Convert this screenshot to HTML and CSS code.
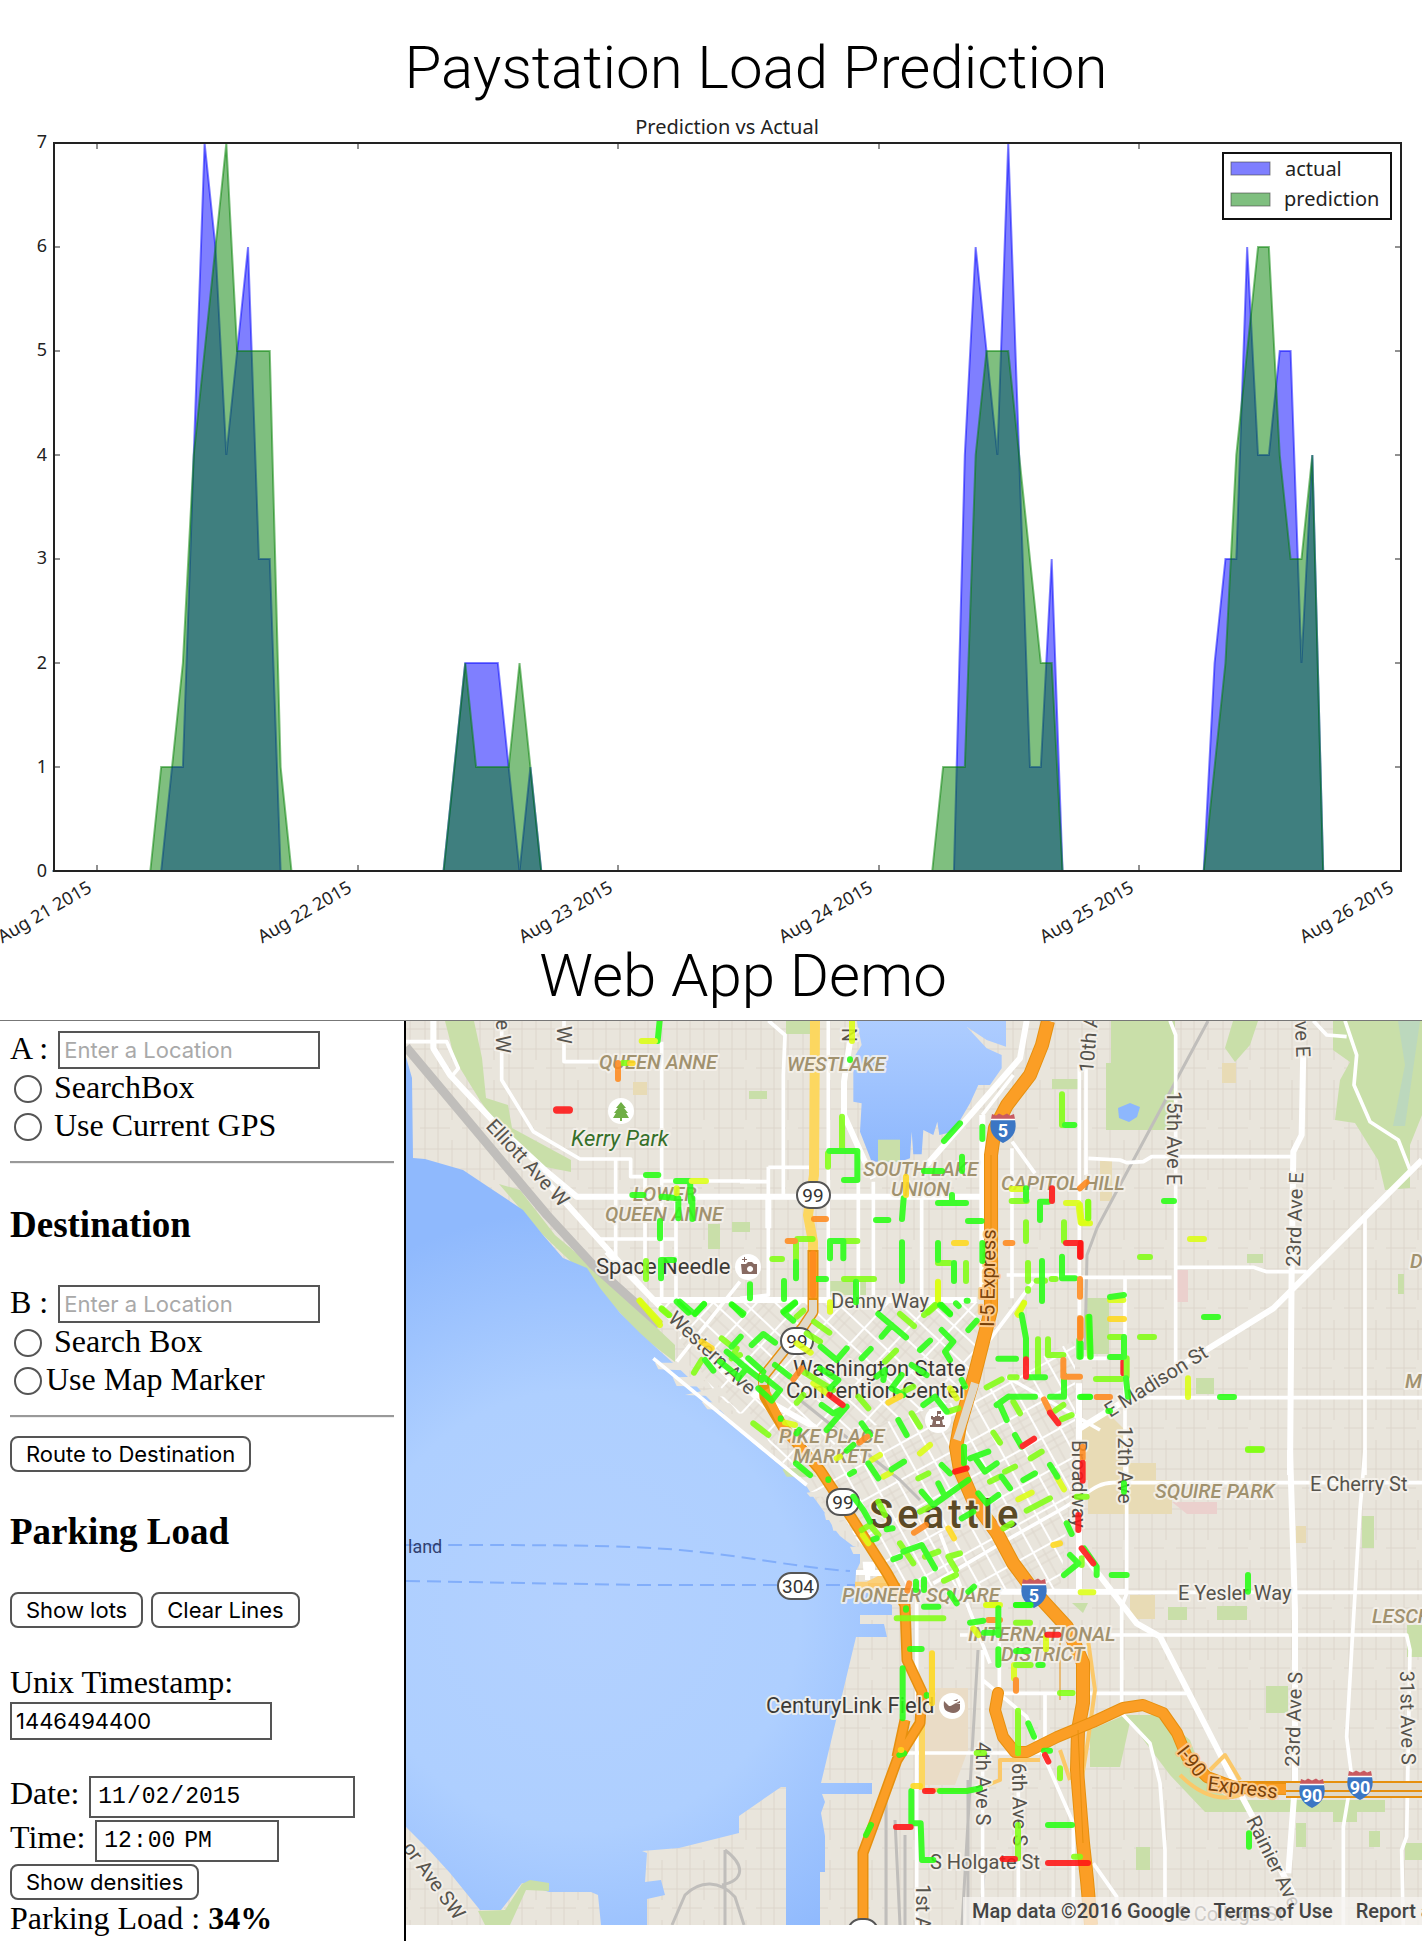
FILE: index.html
```html
<!DOCTYPE html>
<html lang="en">
<head>
<meta charset="utf-8">
<title>Paystation Load Prediction</title>
<link rel="stylesheet" href="styles.css">
</head>
<body>
<section class="prediction">
<h1 class="title">Paystation Load Prediction</h1>
<svg class="chart" viewBox="0 104 1422 836" role="img" aria-label="Prediction vs Actual">
  <text class="chart-title" x="727" y="134">Prediction vs Actual</text>
  <!-- series: one unit of x is an hour, one unit of y a car -->
  <g class="series" transform="translate(96 871) scale(10.86 -104)">
    <path class="actual" d="M-4 0H6L7 1H8L9 4L10 7L11 6L12 4L13 5L14 6L15 3H16L17 0H32L34 2H37L39 0L40 1L41 0H79L80 4L81 6L82 5L83 4L84 7L85 4L86 1H87L88 3L89 0H102L103 2L104 3H105L106 6L107 4H108L109 5H110L111 2L112 4L113 0H120"/>
    <path class="predicted" d="M-4 0H5L6 1H7L8 2L9 4L12 7L13 5H16L17 1L18 0H32L34 2L35 1H38L39 2L41 0H77L78 1H80L81 4L82 5H84L85 4L87 2H88L89 0H102L103 1L104 2L105 4L106 5L107 6H108L109 4L110 3H111L112 4L113 0H120"/>
  </g>
  <rect class="frame" x="54" y="143" width="1347" height="728"/>
  <path class="ticks" d="M97 143v6M358 143v6M618 143v6M879 143v6M1139 143v6M97 871v-6M358 871v-6M618 871v-6M879 871v-6M1139 871v-6M54 767h6M54 663h6M54 559h6M54 455h6M54 351h6M54 247h6M1401 767h-6M1401 663h-6M1401 559h-6M1401 455h-6M1401 351h-6M1401 247h-6"/>
  <g class="tick-label">
    <text x="47" y="148">7</text><text x="47" y="252">6</text><text x="47" y="356">5</text><text x="47" y="461">4</text><text x="47" y="564">3</text><text x="47" y="669">2</text><text x="47" y="773">1</text><text x="47" y="877">0</text>
    <text transform="translate(93 891) rotate(-30)">Aug 21 2015</text>
    <text transform="translate(353 891) rotate(-30)">Aug 22 2015</text>
    <text transform="translate(614 891) rotate(-30)">Aug 23 2015</text>
    <text transform="translate(874 891) rotate(-30)">Aug 24 2015</text>
    <text transform="translate(1135 891) rotate(-30)">Aug 25 2015</text>
    <text transform="translate(1395 891) rotate(-30)">Aug 26 2015</text>
  </g>
  <rect class="legend-box" x="1223" y="153" width="168" height="66"/>
  <rect class="key actual" x="1231" y="162" width="39" height="13"/>
  <rect class="key predicted" x="1231" y="193" width="39" height="13"/>
  <text class="legend-text" x="1285" y="176">actual</text>
  <text class="legend-text" x="1284" y="206">prediction</text>
</svg>
</section>

<h1 class="title title-demo">Web App Demo</h1>
<main class="demo">
<form class="panel">
  <div class="row"><label for="a">A :</label><input class="field" id="a" type="text" placeholder="Enter a Location"></div>
  <div class="choice"><input type="radio" name="from" id="a1"><label for="a1">SearchBox</label></div>
  <div class="choice"><input type="radio" name="from" id="a2"><label for="a2">Use Current GPS</label></div>
  <hr>
  <h3>Destination</h3>
  <div class="row"><label for="b">B :</label><input class="field" id="b" type="text" placeholder="Enter a Location"></div>
  <div class="choice"><input type="radio" name="to" id="b1"><label for="b1">Search Box</label></div>
  <div class="choice tight"><input type="radio" name="to" id="b2"><label for="b2">Use Map Marker</label></div>
  <hr>
  <div class="buttons route"><button type="button">Route to Destination</button></div>
  <h3>Parking Load</h3>
  <div class="buttons"><button type="button">Show lots</button><button type="button">Clear Lines</button></div>
  <div class="stamp"><label for="ts">Unix Timestamp:</label><input class="field" id="ts" type="text" value="1446494400"></div>
  <div class="row when"><label for="date">Date:</label><input class="field mono" id="date" type="date" value="2015-11-02"></div>
  <div class="row when"><label for="time">Time:</label><input class="field mono short" id="time" type="time" value="12:00"></div>
  <div class="buttons"><button type="button">Show densities</button></div>
  <p class="load">Parking Load : <b>34%</b></p>
</form>

<div class="map">
<svg class="canvas" viewBox="406 1021 1016 904" role="img" aria-label="Map of Seattle">
<defs>
  <radialGradient id="bay" gradientUnits="userSpaceOnUse" cx="580" cy="1610" r="400"><stop offset="0" stop-color="#b3d1ff"/><stop offset=".55" stop-color="#aecfff"/><stop offset="1" stop-color="#8fb9fd"/></radialGradient>
  <linearGradient id="lake" x1="0" y1="0" x2="0" y2="1"><stop offset="0" stop-color="#aecdff"/><stop offset="1" stop-color="#8db7fd"/></linearGradient>
  <pattern id="blocks" width="42" height="60" patternUnits="userSpaceOnUse"><path class="lane" d="M5 0V60M18 0V60M32 0V40M0 9H42M0 29H42M0 48H30"/></pattern>
  <pattern id="belltown" width="32" height="21" patternUnits="userSpaceOnUse" patternTransform="rotate(43)"><path class="lane" d="M0 14H32M16 0V21M9 0V21"/><path class="street" d="M0 4H32M2 0V21"/></pattern>
  <pattern id="center" width="21" height="32" patternUnits="userSpaceOnUse" patternTransform="rotate(-29)"><path class="lane" d="M14 0V32M0 17H21M0 10H21"/><path class="street" d="M4 0V32M0 3H21"/></pattern>
  <symbol id="interstate" viewBox="0 0 26 31" overflow="visible"><path fill="#c95a60" d="M2 1l4 1.500 3-2 4 2 4-2 3 2 4-1.500 1 5H1z"/><path fill="#3b76c4" d="M1 7H25C27 16 25 24 13 30 1 24-1 16 1 7z"/><path stroke="#fff" stroke-width="1.500" d="M1 6.500H25"/></symbol>
</defs>
<rect x="406" y="1021" width="1016" height="904" fill="#e9e5dc"/>
<rect x="406" y="1021" width="1016" height="904" fill="url(#blocks)"/>
<!-- parks, campuses and hospitals -->
<g class="park">
  <path d="M445 1021H474L482 1058L486 1098L508 1105L512 1128L571 1160V1172L535 1165L505 1135L481 1102L455 1060Z"/>
  <path d="M499 1184L520 1190L555 1235L587 1262L620 1290L640 1312L675 1345V1362L640 1335L590 1280L543 1235Z"/>
  <path d="M786 1021h24v13h-24zM749 1091h18v8h-18zM878 1139h22v22h-22zM1052 1079h28v10h-28zM1111 1021H1175V1130H1106V1063H1111ZM1233 1021H1258L1250 1045L1235 1062L1225 1048ZM1333 1021H1422V1115L1410 1145V1188L1385 1190L1378 1160L1355 1123L1335 1120L1340 1080L1350 1062L1333 1050ZM830 1281h36v14h-36zM1087 1298h22v56h-22zM1247 1254h16v9h-16zM1398 1274h6v20h-6zM1196 1378h18v16h-18zM708 1224h12v25h-12zM732 1222h18v10h-18z"/>
  <path d="M1090 1730L1125 1715H1160L1190 1740L1205 1780L1230 1800H1385V1812H1205L1170 1775L1130 1722L1120 1767H1090ZM1266 1686h22v27h-22zM1362 1516h12v32h-12zM1168 1607h19v13h-19zM1217 1606h30v14h-30zM1407 1625h15v32h-15zM1136 1847h14v23h-14zM1296 1823h10v24h-10zM1333 1812h24v10h-24zM1369 1831h11v16h-11zM1405 1843h17v17h-17zM1072 1603h16l-5 10z"/>
</g>
<path fill="#bcd8bd" d="M1398 1021H1420L1405 1126H1393L1405 1065Z"/>
<path fill="#e8dbb5" d="M633 1082h14v13h-14zM1222 1063h14v20h-14zM1100 1161h12v40h-12zM1080 1430L1105 1410L1125 1430V1463H1156V1480H1172V1514H1088V1480H1080ZM1130 1595h25v24h-25zM1296 1526h10v17h-10z"/>
<path fill="#ebd0cd" d="M990 1437L1018 1430L1028 1447L985 1475ZM1040 1460L1080 1440V1490L1055 1500L1035 1475ZM1020 1550L1045 1535L1064 1555L1060 1565L1030 1570ZM1175 1270h13v32h-13zM1172 1502h45v12h-30z"/>
<path fill="#eadcc6" d="M937 1688H968V1750L955 1785H925V1720Z"/>
<path fill="#8db7fd" d="M1118 1108l12-5 10 4-3 10-8 5-10-4z"/>
<!-- downtown grids -->
<path fill="#e9e5dc" d="M655 1302H985L960 1425L880 1440L760 1440Z"/><path fill="url(#belltown)" d="M655 1302H985L960 1420L860 1430L790 1470L720 1400Z"/>
<path fill="#e9e5dc" d="M790 1470L860 1430L960 1400L1075 1340V1440L1060 1590H905Z"/><path fill="url(#center)" d="M790 1470L860 1430L960 1400L1075 1340V1440L1060 1590H905Z"/>
<!-- water -->
<path fill="#e9e5dc" d="M655 1361L677 1362L700 1393L860 1590L845 1560H850L833 1535V1520L823 1510L807 1490L780 1460L700 1410Z"/>
<path fill="url(#bay)" d="M406 1057L412 1078L413 1158L425 1159L463 1170L490 1188L523 1210L543 1235L563 1258L587 1268L600 1288L620 1313L640 1333L672 1362L688 1377L700 1390L712 1402L730 1420L776 1462L787 1470L807 1487L812 1495L825 1513L833 1527L840 1536L853 1546L860 1548V1563L856 1571L855 1587L892 1605V1615H860V1624H884L887 1637H856L821 1783H872V1794H822L825 1802L821 1813L825 1836V1872H820V1925H786V1787H781L739 1816V1833L679 1848L642 1851L647 1853L645 1882L661 1880L665 1895L647 1899V1925H601L598 1895L591 1892H549L522 1883L501 1910H480L450 1873L429 1850L406 1827Z"/>
<g transform="translate(620 1280) scale(.33333)">
  <path fill="#e9e5dc" d="M105 248H200L225 272L115 268ZM158 292L240 290L270 320L170 318ZM195 345L300 320L330 350ZM245 365L330 370L350 392L262 388ZM300 403L390 400L440 470L468 545L400 490L330 425ZM560 638L650 625V650H570ZM613 700H700L710 720H618ZM636 735H720L725 752H640ZM690 800H750L755 822H700ZM683 765H740V778Z"/>
  <path fill="#c9dfa9" d="M487 568L550 562L590 590H500Z"/>
  <path fill="#fbd07a" d="M705 905H740L780 885L830 905L850 950L790 925H705Z"/><path fill="#fff" d="M708 870H730L728 845H765V870H785V888H750V900H735V885H708Z"/>
</g>
<g transform="translate(740 1015) scale(.33333)"><path fill="url(#lake)" d="M350 17H798V95L740 75L680 35L740 100L785 120V160L750 210H715L690 265L640 350L598 360L592 320L580 360L550 345L545 418H520L515 350L510 430L480 440H395L360 350L365 265L340 260V130L365 90Z"/><path fill="#c9dfa9" d="M414 374H480V440H414Z"/></g>
<path fill="#c9dfa9" d="M478 1911L505 1910L522 1884L530 1880L549 1883V1891L526 1890L510 1925H485Z"/>
<path class="ferry" d="M406 1545C560 1545 620 1545 680 1550S800 1568 850 1571M406 1581L640 1585H855"/>
<path class="rail" d="M722 1885C745 1880 745 1865 725 1850M725 1850V1925M672 1925L685 1895C700 1880 720 1880 735 1897L744 1925M886 1800V1925M895 1820L900 1925M905 1835V1925M968 1780V1925M978 1650L962 1925M985 1860L980 1925"/>
<path class="rail wide" d="M406 1047L547 1215L593 1265L660 1325"/>
<path class="rail" d="M1208 1021L1097 1228L1087 1255L1085 1350M800 1400L900 1480L920 1500"/>
<!-- white streets -->
<g transform="translate(400 1015) scale(.33333)"><path class="road big" d="M100 17V100L150 180L300 340L440 470L530 545H1740M440 500L760 855H1730M620 710L1000 1100L1250 1240"/><path class="road" d="M18 80H140L175 160L150 190M305 17V195L400 350L540 432H692V485H735M492 17V140H600M785 80V855M647 435V725M735 490V800M828 560V850M590 672H830M785 498H1050M1020 800L830 1040M760 1030L1220 1410"/></g>
<g transform="translate(740 1015) scale(.33333)"><path class="road big" d="M85 540V640M330 80L312 200V300L370 430L400 490M560 450L840 130L860 17M727 300V850"/><path class="road" d="M85 455V840L0 850M85 457H210M0 500H80M265 17V870M355 500V850M545 545V850M727 300L820 180M130 180V540M85 17L135 60L130 180M816 400V850M816 380L885 475M400 500V860M1018 150V900M800 780H1020M880 800L700 1040"/></g>
<g transform="translate(1080 1015) scale(.33333)"><path class="road big" d="M670 100L665 360L640 410L635 760L630 1380M1026 435L580 880L0 1240"/><path class="road" d="M18 150V480M270 17L287 60V1060M25 430L120 435L140 443L190 440L215 425H640M700 17L740 60L800 65M795 17L830 120L822 210L870 320L955 375L990 465M0 787H275M287 757H520L560 770H680M855 610V1380M145 1148H1026M135 790V1380M0 1030H80"/></g>
<g transform="translate(960 1450) scale(.33333)"><path class="road big" d="M990 0L1005 480V1000L985 1270M0 425H500M357 -200V420M360 300L530 520L600 560L830 1010L1000 1330"/><path class="road" d="M500 427H1386M0 555H1340L1350 600L1340 1160L1325 1200L1330 1425M1215 0L1200 180L1175 600L1160 860L1175 980L1150 1130V1425M1386 98H460C400 100 390 130 300 180L140 270L-80 400M500 0V430L485 470V790L570 880L600 1000L615 1200V1425M130 730H680M68 600V1425M-170 909H240M175 900V1425M118 480V730M68 690L200 800L340 1120V1425M400 1240L470 1340V1425M255 730V900M-130 420V1425M-60 250L90 640M420 -60L140 -220"/></g>
<!-- highways -->
<path class="ramp" d="M1088 1640L1095 1690L1088 1740L1080 1790M1070 1780L1060 1750M1210 1770L1225 1755L1240 1780M1180 1775Q1210 1805 1240 1795M925 1790H975L1000 1780V1760H1040M868 1585H900"/>
<path class="sr" d="M815 1021L814 1175L808 1215L813 1242V1280"/><path class="sr thin" d="M922 1700V1790"/>
<path class="casing" d="M813 1250V1312L803 1327L763 1377L765 1397L783 1427L820 1470L853 1520L887 1573L905 1605L907 1660L922 1692L920 1723L897 1760L880 1807L863 1853V1925M905 1720L897 1757"/>
<path class="freeway" d="M765 1390L783 1427L820 1470L853 1520L887 1573L905 1605L907 1660L922 1692L920 1723L897 1760L880 1807L863 1853V1925M905 1720L897 1757M813 1252V1298"/>
<path class="tunnel" d="M813 1300V1312L803 1327L763 1377V1385"/>
<path class="casing i" d="M1048 1021L1042 1045L1030 1075L1007 1105L995 1128L991 1155V1310L974 1377L960 1425L956 1447L960 1470L973 1500L997 1533L1013 1563L1033 1590L1067 1627L1083 1663V1703L1078 1730L1077 1770L1083 1843L1087 1880L1091 1925"/>
<path class="freeway i" d="M1048 1021L1042 1045L1030 1075L1007 1105L995 1128L991 1155V1310L974 1377L960 1425L956 1447L960 1470L973 1500L997 1533L1013 1563L1033 1590L1067 1627L1083 1663V1703L1078 1730L1077 1770L1083 1843L1087 1880L1091 1925"/>
<path class="tunnel" d="M975 1383L961 1428L957 1440"/>
<path class="casing i90" d="M998 1693L995 1710L1003 1737L1015 1752H1027L1057 1737L1093 1722L1123 1708L1143 1705L1163 1713L1177 1733L1187 1757L1207 1777L1237 1788L1288 1789"/><path class="freeway i90" d="M998 1693L995 1710L1003 1737L1015 1752H1027L1057 1737L1093 1722L1123 1708L1143 1705L1163 1713L1177 1733L1187 1757L1207 1777L1237 1788L1288 1789"/>
<path fill="#e0d8c8" d="M1286 1782H1422V1798H1286z"/><path class="deck" d="M1225 1782H1422M1286 1791H1422M1286 1797H1422"/>
<path class="seam" d="M991 1155V1310M1060 1640V1700M1078 1730L1083 1843"/>
<!-- labels -->
<g class="hood">
  <text x="599" y="1069">QUEEN ANNE</text><text x="787" y="1071">WESTLAKE</text><text x="633" y="1201">LOWER</text><text x="605" y="1221">QUEEN ANNE</text><text x="863" y="1176">SOUTH LAKE</text><text x="891" y="1196">UNION</text><text x="1001" y="1190">CAPITOL HILL</text><text x="779" y="1443">PIKE PLACE</text><text x="793" y="1463">MARKET</text><text x="842" y="1602">PIONEER SQUARE</text><text x="968" y="1641">INTERNATIONAL</text><text x="1001" y="1661">DISTRICT</text><text x="1155" y="1498">SQUIRE PARK</text><text x="1372" y="1623">LESCHI</text><text x="1410" y="1268">D</text><text x="1405" y="1388">M</text>
</g>
<text class="kerry" x="571" y="1146">Kerry Park</text>
<g class="poi"><text x="596" y="1274">Space Needle</text><text x="793" y="1376">Washington State</text><text x="786" y="1398">Convention Center</text><text x="766" y="1713">CenturyLink Field</text></g>
<text class="city" x="869" y="1528">Seattle</text>
<g class="way">
  <text x="831" y="1308">Denny Way</text><text x="1310" y="1491">E Cherry St</text><text x="1178" y="1600">E Yesler Way</text><text x="930" y="1869">S Holgate St</text><text x="1177" y="1921">S College St</text>
  <text transform="translate(485 1127) rotate(47)">Elliott Ave W</text><text transform="translate(667 1320) rotate(43)">Western Ave</text>
  <text transform="translate(496 1010) rotate(90)">ve W</text><text transform="translate(557 1026) rotate(90)">W</text><text transform="translate(857 1042) rotate(-90)">N</text>
  <text transform="translate(1093 1073) rotate(-85)">10th A</text><text transform="translate(1167 1091) rotate(90)">15th Ave E</text><text transform="translate(1300 1267) rotate(-88)">23rd Ave E</text><text transform="translate(1295 1021) rotate(88)">ve E</text>
  <text transform="translate(1110 1418) rotate(-32)">E Madison St</text><text transform="translate(1118 1426) rotate(90)">12th Ave</text><text transform="translate(1072 1440) rotate(90)">Broadway</text><text transform="translate(976 1742) rotate(90)">4th Ave S</text><text transform="translate(1012 1763) rotate(89)">6th Ave S</text><text transform="translate(916 1884) rotate(90)">1st A</text>
  <text transform="translate(1299 1767) rotate(-88)">23rd Ave S</text><text transform="translate(1400 1671) rotate(89)">31st Ave S</text><text transform="translate(1246 1820) rotate(64)">Rainier Ave</text><text transform="translate(402 1848) rotate(54)">or Ave SW</text>
</g>
<g class="express"><text transform="translate(994 1327) rotate(-89)">I-5 Express</text><text transform="translate(1176 1752) rotate(52)">I-90</text><text transform="translate(1207 1790) rotate(7)">Express</text></g>
<text class="sea" x="408" y="1553">land</text>
<!-- route shields -->
<g class="oval">
  <rect x="797" y="1182" width="33" height="26" rx="13"/><rect x="781" y="1328" width="32" height="26" rx="13"/><rect x="827" y="1489" width="32" height="26" rx="13"/><rect x="778" y="1573" width="40" height="26" rx="13"/><rect x="848" y="1919" width="30" height="26" rx="13"/>
  <text x="813" y="1202">99</text><text x="797" y="1348">99</text><text x="843" y="1509">99</text><text x="798" y="1593">304</text><text x="863" y="1938">99</text>
</g>
<use href="#interstate" x="990" y="1113" width="26" height="31"/><use href="#interstate" x="1021" y="1578" width="26" height="31"/><use href="#interstate" x="1296" y="1778" width="32" height="31"/><use href="#interstate" x="1344" y="1770" width="32" height="31"/>
<g class="number"><text x="1003" y="1137">5</text><text x="1034" y="1602">5</text><text x="1312" y="1802">90</text><text x="1360" y="1794">90</text></g>
<!-- places -->
<g fill="#fff"><circle cx="621" cy="1111" r="13"/><circle cx="748" cy="1267" r="13"/><circle cx="938" cy="1420" r="13"/><circle cx="952" cy="1706" r="13"/></g>
<path fill="#6fae45" d="M621 1102l5 6h-2l4 5h-2l3 5h-7v3h-2v-3h-7l3-5h-2l4-5h-2z"/>
<path fill="#876a62" fill-rule="evenodd" d="M741 1264h5l2-2h4l2 2h3v10h-15zM750 1266a3 3 0 1 0 .1 0zM742 1259h2v-2h1v2h2v1h-2v2h-1v-2h-2z"/>
<path fill="#876a62" fill-rule="evenodd" d="M930 1427v-2h2l1-5-2-1v-3h2v1h2v-1h2v-5h4v3h-3v2h2v1h2v-1h2v3l-2 1 1 5h2v2zM936 1424h4v-3h-4z"/>
<path fill="#876a62" d="M944 1701l5 5c4 0 5-4 11-2v5c-2 4-7 5-11 3-4-1-6-4-5-11zM953 1701l5-2-1 2zM954 1704l6-3v2z"/>
<!-- parking density lines -->
<g class="density" transform="translate(400 1015) scale(.33333)">
  <path class="d0" d="M779 17L773 78M697 540H730M738 480H775M828 498H870L873 560M785 545L835 550V610M877 550V612M780 618V670M783 790V735H822M840 860L875 890M885 895L912 868M995 868L1030 895"/>
  <path class="d1" d="M738 738V792M785 880L808 900M668 144H685"/><path class="d2" d="M725 78H765M875 498H918M830 520V535M718 857L780 930"/><path class="d3" d="M690 145h8"/><path class="d4" d="M654 144V192"/><path class="d5 fat" d="M470 285H508"/>
</g>
<g class="density" transform="translate(740 1015) scale(.33333)">
  <path class="d2" d="M336 20V78M815 522H850M978 564H1015L1022 622H1040M852 865L832 895M594 803V855M270 862V890"/>
  <path class="d1" d="M306 305V405M264 415V455M815 558H860M1045 560V610M858 622V678M972 622V678M172 672H218M168 685V735M315 678H352M594 744H630M678 744V798M97 732H126M864 744V798M890 797H915M935 792h12M864 822v5M966 238V330M590 870L565 892M312 792H402"/>
  <path class="d0" d="M330 133v2M268 408H352V495H312M612 378L660 325M727 335V372M666 425V468M552 468H606M491 550L486 612M594 564H678M636 540V560M408 615H445M684 618H725M858 520V555M900 615V560H925M168 740V790M270 730V678H310V730M486 682V798M594 684V735M642 744V798M727 684V738M906 738V858M966 725V790H1005M228 792H258M348 800V862M30 808V850M132 798V852M165 862L130 890M605 870L630 895M648 865l8 8M680 857h3M975 330H1003"/>
  <path class="d3" d="M498 485V540M642 684H678"/><path class="d4" d="M1020 520L1040 502M797 684H817M222 612H258M143 678H165M1020 792V845M219 715V840"/><path class="d5" d="M936 520V558M978 684H1020V725"/>
</g>
<g class="density" transform="translate(1080 1015) scale(.33333)">
  <path class="d2" d="M330 672H372M0 570L5 625H30M90 855H130M324 1090V1146"/><path class="d3" d="M90 912H132"/><path class="d4" d="M2 912V965M50 1146H90"/><path class="d5" d="M130 1040V1075M2 684V725"/>
  <path class="d1" d="M180 726H210M24 562V610M90 966H130M180 966H222M140 1030V1085M24 906L30 1025M48 1092H125M504 1302H546"/>
  <path class="d0" d="M252 558H282M90 846L132 840M372 906H414M132 966V1025M90 1026H130M138 1090L144 1145M0 1146H30M420 1146H462M85 1188h5M2 985V1025"/>
</g>
<g class="density" transform="translate(620 1280) scale(.33333)">
  <path class="d2" d="M60 62L118 125M954 5V60M530 190L572 218M580 310L620 340M990 325L1010 355M900 520L930 495M755 540L780 525M790 590L812 578M495 428L525 435M650 535l10-5M728 765L745 790M1195 658L1235 638M1310 590L1332 628M1100 975H1140M1212 68L1195 105M1382 937H1420"/>
  <path class="d1" d="M125 88L145 105M530 110L550 92M582 125L628 158M912 105L945 75M840 102L882 138M795 245L828 212M560 160L600 185M305 175L330 195M360 225L335 235L350 205M222 278L245 240M550 275L590 300L640 330M840 340L880 320M715 350L745 385M530 368L550 345M985 395L1015 385M875 400L900 440M895 595L925 580M400 430L445 465M775 665L795 705M725 750L750 735L775 765M900 695L930 680M1110 605L1140 590M1155 575L1185 560M1220 692L1290 655M1150 745L1175 730M1232 535L1265 515M1120 458L1140 488M840 790L880 850M915 830L955 815M985 830L1020 820M990 840L1008 870M972 902L1008 885M830 1015H970M1284 178V225H1330M1170 292H1190M1180 365L1200 400M1305 392L1330 375M1325 418L1355 405M1370 650H1400M1385 835V855M1254 178V288M1100 322L1145 298"/>
  <path class="d0" d="M170 65L205 98M225 102L252 72M337 75L367 105M525 70L492 98L520 122M960 75L990 103M775 102L858 172M785 170L815 135M965 150L1000 185L975 215L990 240M1045 150L1070 122M900 210L930 182M725 235L752 207M602 200L650 240L680 205M395 195L430 162L465 188M335 200L362 170M255 240L280 272M320 215L380 265L355 295M300 245L350 285M385 235L430 275M360 250L425 300M430 290L480 330L455 362L415 325M465 255L510 290M600 265L655 300L630 325M875 255L920 285M770 290L795 270L790 300M845 285L815 325L850 345M605 375L640 400L680 380L620 450M910 375L945 350L980 395M1025 300L1035 320M835 420L860 465M725 430L750 465M680 512L700 495M745 550L775 595M815 568L852 545M690 582L702 575M482 415v2M528 550L570 585M530 460l8-10M625 598v2M700 650L730 690L750 725M800 748L818 745M760 778L770 775M905 635L940 675L1045 600M955 610L975 650M965 555L990 580M1032 500V550M1050 535L1105 515M1070 540L1095 575L1130 550M1075 640L1100 670L1135 645M1025 715L1060 695M1145 590L1170 625M1210 600L1245 580M1290 555L1312 590M1185 465L1205 500M820 838L840 830M850 815L905 795L945 865M1045 935L1062 920M990 940L1010 970M888 905V930M912 898V930M858 985v4M912 980H955M1188 975H1230M1205 105L1218 175V230M1332 285V350H1290M1135 236H1188M1170 350H1245M1225 292H1275M1130 375L1165 350M1140 375L1160 420M1408 110L1412 230M1378 180V230M1385 350H1410M1340 730L1355 762M1350 825L1375 850L1332 885M1392 805L1430 860V885"/>
  <path class="d3" d="M245 185L275 205M805 368L842 348M985 745L1002 775M1300 795L1320 790"/><path class="d4" d="M520 298L545 265M718 488L742 470M882 758L918 735M868 910L862 932M1330 240V290H1380M1272 358L1290 395M1380 115V175M1388 500V535"/><path class="d5" d="M628 345L668 375M1005 575L1040 565M1208 498L1242 476M1218 238V290M1290 398L1315 430M1388 548V602M1375 705V750M1385 805L1420 850"/>
</g>
<g class="density" transform="translate(960 1450) scale(.33333)">
  <path class="d2" d="M78 465H115M258 560V598M162 645V685M40 535l15 20"/><path class="d4" d="M85 510H120M168 690V722"/>
  <path class="d1" d="M864 0H905M168 518H210M168 645H212M300 729H338M174 782V910M300 955V985M50 909H72M174 1125V1225M342 1220H360"/>
  <path class="d0" d="M492 100V125M455 375H500M864 375V425M168 465H212M115 475V555M72 548H100M30 518L70 512M168 603H205M115 598V645M235 645H248M205 820L222 860M252 902H270M-60 1023H20L60 1015M264 1125H336M867 1150V1190M-146 1023V1120H-118L-114 1230H-80M-172 655V805M-150 597H-115M-100 735v2M-182 915l15-5M-282 1155l15-30"/>
  <path class="d3" d="M-84 610V760M-140 1008H-120M-178 900h2"/><path class="d5" d="M262 554H295M255 915L265 935M-105 1023H-82M-192 1131H-148M128 1227H165M264 1239H384"/>
</g>
</svg>
<div class="credit"><span>Map data ©2016 Google</span><a href="#terms">Terms of Use</a><a href="#report">Report a map error</a></div>
</div>
</main>
</body>
</html>
```
FILE: styles.css
```css
* { box-sizing: border-box; }
body { margin: 0; background: #fff; color: #000; font-family: "Liberation Serif", serif; overflow-x: hidden; }

.title { margin: 0; padding: 32px 0 0 90px; text-align: center; font: 300 60px/72px Roboto, sans-serif; }
.title-demo { padding: 0 0 0 64px; }

/* chart */
.chart { display: block; width: 100%; height: auto; overflow: visible; font-family: "Noto Sans", sans-serif; fill: #222; }
.chart-title { font-size: 20px; text-anchor: middle; }
.tick-label { font-size: 18px; text-anchor: end; }
.legend-text { font-size: 20px; }
.series path { stroke-width: 2; vector-effect: non-scaling-stroke; }
.actual { fill: rgba(0, 0, 255, .5); stroke: rgba(0, 0, 255, .5); }
.predicted { fill: rgba(0, 128, 0, .5); stroke: rgba(0, 128, 0, .5); }
.key { stroke: #444; stroke-opacity: .6; }
.frame, .ticks { fill: none; stroke: #222; stroke-width: 2; }
.ticks { stroke-width: 1; }
.legend-box { fill: #fff; stroke: #111; stroke-width: 2; }

/* demo */
.demo { display: flex; align-items: stretch; margin-top: 8px; border-top: 1px solid #777; }
.panel { flex: none; width: 406px; padding: 10px 10px 5px; border-right: 2px solid #000; font-size: 32px; line-height: 34px; }
.row { display: flex; align-items: flex-start; gap: 10px; height: 39px; }
.field { width: 262px; height: 38px; padding: 0 4px; border: 2px solid #555; border-radius: 0; background: #fff; color: #000; font: 22px Inter, sans-serif; }
.field::placeholder { color: #a9a9a9; opacity: 1; }
.choice { display: flex; align-items: flex-start; gap: 12px; height: 38px; padding-left: 4px; }
.choice.tight { gap: 4px; }
.choice input { appearance: none; flex: none; width: 28px; height: 28px; margin: 5px 0 0; border: 2px solid #555; border-radius: 50%; background: #fff; }
hr { height: 3px; margin: 15px 0 40px; border: 0; border-top: 2px solid #999; border-bottom: 1px solid #eee; }
h3 { margin: 39px 0; font-size: 37px; line-height: 42px; }
.buttons { display: flex; gap: 8px; }
.route { margin-top: -22px; }
button { height: 36px; padding: 0 14px; border: 2px solid #555; border-radius: 8px; background: #fff; color: #000; font: 22px Inter, sans-serif; }
.stamp { display: flex; flex-direction: column; gap: 3px; margin: 37px 0 36px; }
.when { height: 44px; }
.mono { width: 266px; height: 42px; padding-left: 6px; font: 23px "Liberation Mono", monospace; }
.short { width: 184px; }
.mono::-webkit-calendar-picker-indicator { display: none; }
.load { margin: 0; line-height: 36px; }

/* map */
.map { position: relative; flex: 1; align-self: flex-start; min-width: 0; overflow: hidden; }
.canvas { display: block; width: 100%; height: auto; font-family: Roboto, sans-serif; }
.canvas path { stroke-linejoin: round; }
.lane { fill: none; stroke: #ddd6cc; stroke-width: 1; }
.street { fill: none; stroke: #fff; stroke-width: 2; }
.park { fill: #c9dfa9; }
.ferry { fill: none; stroke: #82aefa; stroke-width: 2; stroke-dasharray: 14 7; }
.rail { fill: none; stroke: #c0bebb; stroke-width: 3; }
.rail.wide { stroke-width: 9; }
.road { fill: none; stroke: #fff; stroke-width: 11; }
.road.big { stroke-width: 18; }
.ramp { fill: none; stroke: #fbc869; stroke-width: 4; }
.sr { fill: none; stroke: #fcd760; stroke-width: 10; }
.sr.thin { stroke-width: 6; }
.casing { fill: none; stroke: #e6900f; stroke-width: 11; }
.freeway { fill: none; stroke: #fb9e25; stroke-width: 8; }
.casing.i { stroke-width: 14; }
.freeway.i { stroke-width: 12; }
.casing.i90 { stroke-width: 12; stroke-linecap: round; }
.freeway.i90 { stroke-width: 10; stroke-linecap: round; }
.tunnel { fill: none; stroke: #e0d8c8; stroke-width: 8; }
.deck, .seam { fill: none; stroke: #e6900f; stroke-width: 2; }
.seam { stroke-width: 1; }
.canvas text { paint-order: stroke; stroke: rgba(245, 242, 236, .85); stroke-width: 4px; stroke-linejoin: round; }
.hood { font-size: 20px; font-style: italic; font-weight: 500; fill: #a1926f; }
.kerry { font-size: 22px; font-style: italic; fill: #36702a; }
.poi { font-size: 22px; fill: #3c3a36; }
.way { font-size: 20px; fill: #56534c; }
.city { font-size: 40px; font-weight: 500; letter-spacing: 4px; fill: #5c4a25; }
.express { font-size: 20px; fill: #7a4208; }
.canvas .express text { stroke: #fcc98a; }
.sea { font-size: 18px; fill: #31416f; }
.canvas .sea, .canvas .oval text, .canvas .number text { stroke: none; }
.oval { font-size: 19px; text-anchor: middle; }
.oval rect { fill: #fff; stroke: #555; stroke-width: 2; }
.oval text { fill: #333; }
.number { font-size: 18px; font-weight: 700; text-anchor: middle; fill: #fff; }
.density { fill: none; stroke-width: 18; stroke-linecap: round; opacity: .88; }
.d0 { stroke: #28ff14; }
.d1 { stroke: #82ff14; }
.d2 { stroke: #dcff14; }
.d3 { stroke: #ffd91e; }
.d4 { stroke: #ff8a1e; }
.d5 { stroke: #ff1414; }
.fat { stroke-width: 22; }
.credit { position: absolute; left: 557px; bottom: 0; display: flex; gap: 23px; align-items: center; height: 28px; padding-left: 9px; white-space: nowrap; background: rgba(245, 243, 240, .75); font: 500 20px/28px Roboto, sans-serif; color: #444; }
.credit a { color: inherit; text-decoration: none; }
```
